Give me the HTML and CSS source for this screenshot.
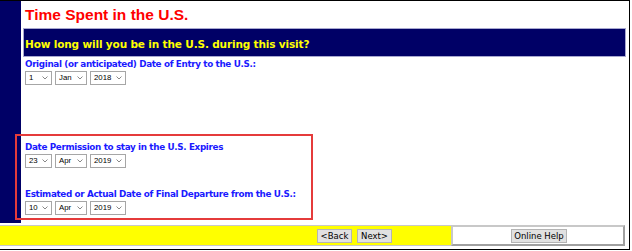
FILE: index.html
```html
<!DOCTYPE html>
<html>
<head>
<meta charset="utf-8">
<link rel="stylesheet" href="styles.css">
</head>
<body>
<div class="frame">
  <div class="main">
    <div class="sidebar"></div>
    <div class="content">
      <div class="title">Time Spent in the U.S.</div>
      <div class="question">How long will you be in the U.S. during this visit?</div>
      <div class="field entry">
        <div class="label">Original (or anticipated) Date of Entry to the U.S.:</div>
        <div class="dates">
          <span class="sel day">1</span><span class="sel mon">Jan</span><span class="sel yr">2018</span>
        </div>
      </div>
      <div class="field expires">
        <div class="label">Date Permission to stay in the U.S. Expires</div>
        <div class="dates">
          <span class="sel day">23</span><span class="sel mon">Apr</span><span class="sel yr">2019</span>
        </div>
      </div>
      <div class="field depart">
        <div class="label">Estimated or Actual Date of Final Departure from the U.S.:</div>
        <div class="dates">
          <span class="sel day">10</span><span class="sel mon">Apr</span><span class="sel yr">2019</span>
        </div>
      </div>
    </div>
    <div class="highlight"></div>
  </div>
  <div class="footer">
    <div class="nav">
      <span class="btn">&lt;Back</span><span class="btn">Next&gt;</span>
    </div>
    <div class="help">
      <span class="btn help-btn">Online Help</span>
    </div>
  </div>
</div>
</body>
</html>
```
FILE: styles.css
```css
html, body {
  margin: 0;
  padding: 0;
  background: #fff;
  overflow: hidden;
}
.frame {
  width: 630px;
  height: 250px;
  box-sizing: border-box;
  border: 1px solid #000;
  border-left-width: 0;
  display: flex;
  flex-direction: column;
  background: #fff;
}
.main {
  position: relative;
  display: flex;
  height: 222px;
}
.sidebar {
  width: 21px;
  background: #000066;
  flex: none;
}
.content {
  margin-left: 2px;
  flex: 1;
  padding-right: 3px;
  display: flex;
  flex-direction: column;
}
.title {
  height: 27px;
  font-family: "Liberation Sans", Arial, sans-serif;
  font-weight: bold;
  font-size: 15.5px;
  line-height: 27px;
  color: #ff0000;
  padding-left: 2px;
}
.question {
  background: #000066;
  border: 1px solid #a8a8d0;
  color: #ffff00;
  font-family: "DejaVu Sans", Verdana, sans-serif;
  font-weight: bold;
  font-size: 10.5px;
  letter-spacing: -0.15px;
  line-height: 12px;
  padding: 9px 0 0 1px;
  box-sizing: border-box;
  height: 29px;
}
.field {
  padding-left: 2px;
}
.entry { margin-top: 2px; }
.expires { margin-top: 57px; }
.depart { margin-top: 21px; }
.label {
  font-family: "DejaVu Sans", Verdana, sans-serif;
  font-weight: bold;
  font-size: 8.8px;
  letter-spacing: -0.35px;
  line-height: 11px;
  color: #1a1aff;
}
.dates {
  display: flex;
  gap: 3px;
  margin-top: 1px;
}
.sel {
  height: 14px;
  box-sizing: border-box;
  border: 1px solid #a6a6a6;
  background: #fff url("data:image/svg+xml;utf8,<svg xmlns='http://www.w3.org/2000/svg' width='6' height='4'><path d='M0.5 0.5 L3 3 L5.5 0.5' fill='none' stroke='%23888' stroke-width='1'/></svg>") no-repeat right 3px center;
  font-family: "Liberation Sans", Arial, sans-serif;
  font-size: 7.8px;
  line-height: 12px;
  color: #000;
  padding-left: 3px;
}
.day { width: 27px; }
.mon { width: 32px; }
.yr { width: 36px; }
.highlight {
  position: absolute;
  left: 15px;
  top: 133px;
  width: 298px;
  height: 86px;
  box-sizing: border-box;
  border: 2px solid #e53b3b;
}
.footer {
  margin-top: 2px;
  height: 21px;
  display: flex;
}
.nav {
  width: 451px;
  box-sizing: border-box;
  background: #ffff00;
  border-top: 1px solid #c8c8c8;
  border-bottom: 1px solid #c8c8c8;
  display: flex;
  align-items: center;
  padding-left: 317px;
  gap: 5px;
}
.help {
  width: 174px;
  box-sizing: border-box;
  background: #fff;
  border: 2px solid #c8c8c8;
  border-right-color: #a0a0a0;
  border-bottom-color: #a0a0a0;
  display: flex;
  align-items: center;
  padding-left: 58px;
}
.btn {
  display: inline-block;
  height: 14px;
  box-sizing: border-box;
  width: 35px;
  text-align: center;
  background: #e1e1e1;
  border: 1px solid #b4b4b4;
  font-family: "DejaVu Sans", Tahoma, sans-serif;
  font-size: 8.5px;
  line-height: 12px;
  color: #000;
}
.help-btn {
  width: 56px;
}
```
